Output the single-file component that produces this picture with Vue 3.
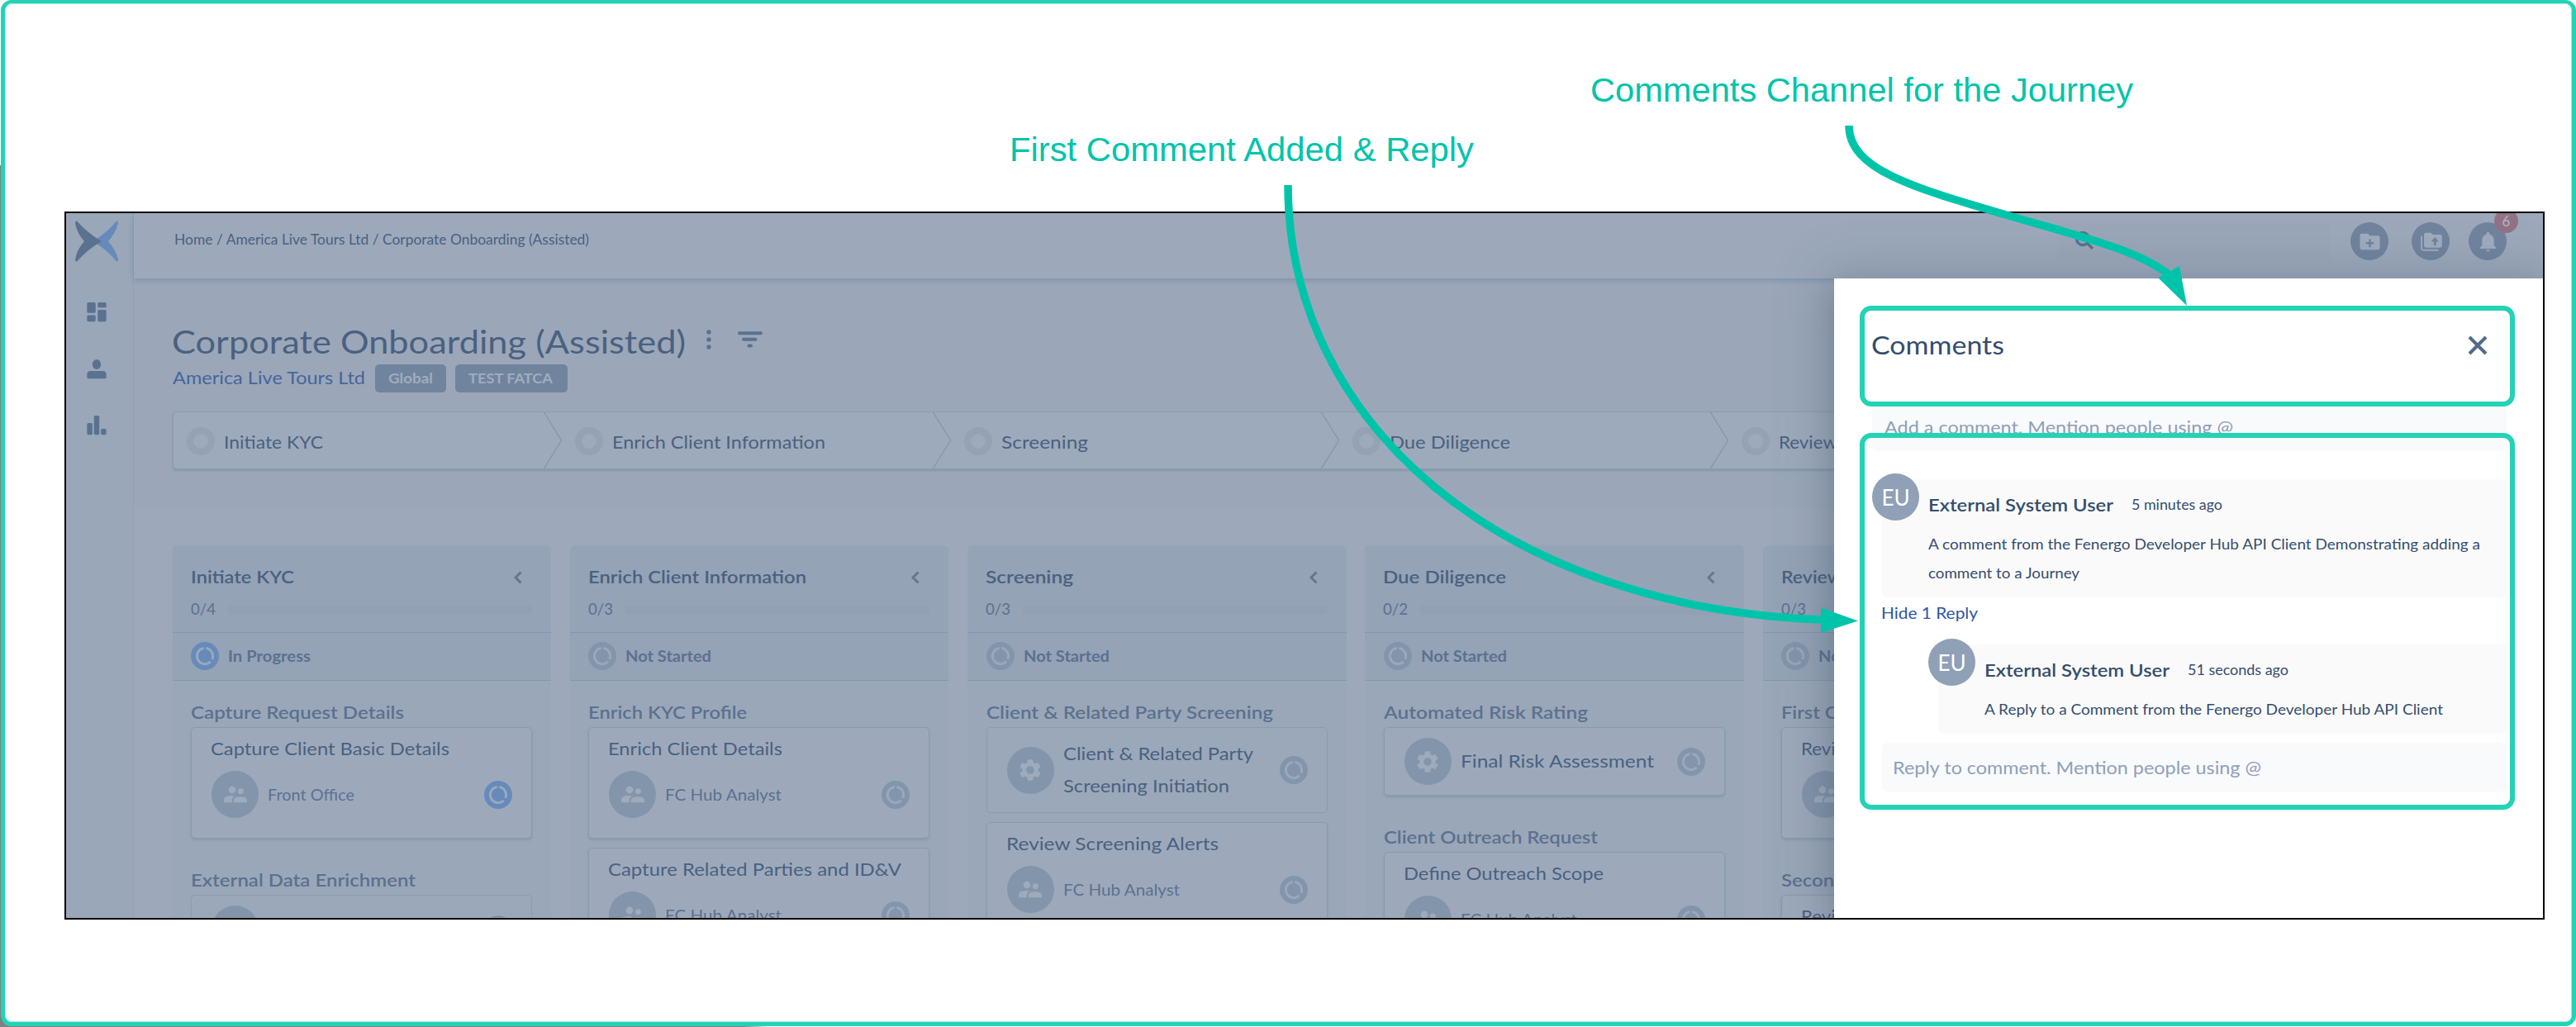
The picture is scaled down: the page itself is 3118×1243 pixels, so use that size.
<script setup>
// widens or narrows a label so it takes the given width
const vFit = {
  mounted(el, { value }) {
    if (!value) return;
    el.style.display = 'inline-block';
    const natural = el.getBoundingClientRect().width;
    el.style.transformOrigin = 'left center';
    el.style.transform = `scaleX(${value / natural})`;
    el.style.marginRight = value - natural + 'px';
  },
};

const steps = [
  { name: 'Initiate KYC', width: 120 },
  { name: 'Enrich Client Information', width: 258 },
  { name: 'Screening', width: 105 },
  { name: 'Due Diligence', width: 146 },
  { name: 'Review', width: 71 },
];

const analyst = { name: 'FC Hub Analyst', width: 141 };

const columns = [
  {
    name: 'Initiate KYC', width: 125, count: '0/4', active: true, status: 'In Progress', statusWidth: 100,
    sections: [
      {
        name: 'Capture Request Details', width: 258,
        tasks: [{ name: 'Capture Client Basic Details', width: 289, owner: { name: 'Front Office', width: 105 }, active: true }],
      },
      {
        name: 'External Data Enrichment', width: 272,
        tasks: [{ name: '', system: true, flat: true }],
      },
    ],
  },
  {
    name: 'Enrich Client Information', width: 264, count: '0/3', status: 'Not Started', statusWidth: 104,
    sections: [
      {
        name: 'Enrich KYC Profile', width: 192,
        tasks: [
          { name: 'Enrich Client Details', width: 211, owner: analyst },
          { name: 'Capture Related Parties and ID&V', width: 355, owner: analyst },
        ],
      },
    ],
  },
  {
    name: 'Screening', width: 106, count: '0/3', status: 'Not Started', statusWidth: 104,
    sections: [
      {
        name: 'Client & Related Party Screening', width: 347,
        tasks: [
          { name: 'Client & Related Party', width: 230, second: 'Screening Initiation', secondWidth: 201, system: true, flat: true },
          { name: 'Review Screening Alerts', width: 257, owner: analyst },
        ],
      },
    ],
  },
  {
    name: 'Due Diligence', width: 149, count: '0/2', status: 'Not Started', statusWidth: 104,
    sections: [
      { name: 'Automated Risk Rating', width: 247, tasks: [{ name: 'Final Risk Assessment', width: 234, system: true }] },
      { name: 'Client Outreach Request', width: 259, tasks: [{ name: 'Define Outreach Scope', width: 242, owner: analyst }] },
    ],
  },
  {
    name: 'Review', width: 74, count: '0/3', status: 'Not Started', statusWidth: 104,
    sections: [
      { name: 'First Check', width: 118, tasks: [{ name: 'Review', width: 71, owner: analyst }] },
      { name: 'Second Check', width: 150, tasks: [{ name: 'Review', width: 71, owner: analyst }] },
    ],
  },
];
</script>

<template>
  <div class="page">
    <div class="canvas">
      <div class="frame">
        <aside class="sidebar">
          <svg class="logo" viewBox="0 0 52 50">
            <path fill="#668abb" d="M50 0.5Q52 0 52 3Q49 15 40 25Q49 35 52 47Q52 50 50 49.5Q40 37 26 28V22Q40 13 50 0.5Z" />
            <path fill="#5b7190" d="M2 0.5Q0 0 0 3Q2 15 11 25Q2 35 0 47Q0 50 2 49.5Q16 34 32 25Q16 16 2 0.5Z" />
          </svg>
          <svg class="nav-icon" viewBox="0 0 24 24">
            <rect x="3" y="3" width="8" height="10" rx="1.2" /><rect x="3" y="15" width="8" height="6" rx="1.2" />
            <rect x="13" y="3" width="8" height="5" rx="1.2" /><rect x="13" y="10" width="8" height="11" rx="1.2" />
          </svg>
          <svg class="nav-icon" viewBox="0 0 24 24">
            <ellipse cx="12" cy="7.7" rx="4" ry="4.7" /><path d="M3 20V17Q3 14 6.5 14H17.5Q21 14 21 17V20Q21 21 20 21H4Q3 21 3 20Z" />
          </svg>
          <svg class="nav-icon" viewBox="0 0 24 24">
            <rect x="3" y="10" width="5" height="11" rx="1.2" /><rect x="9.5" y="3" width="5" height="18" rx="1.2" /><rect x="16" y="15.5" width="5" height="5.5" rx="1.2" />
          </svg>
        </aside>

        <div class="main">
          <header class="topbar">
            <span class="crumbs"><span v-fit="502">Home / America Live Tours Ltd / Corporate Onboarding (Assisted)</span></span>
            <div class="tools">
              <div class="search">
                <svg viewBox="0 0 24 24"><circle cx="10" cy="10" r="7.5" /><path d="M15.5 15.5L22 22" /></svg>
              </div>
              <div class="tool">
                <svg viewBox="0 0 24 24">
                  <path fill="#9fadbf" d="M4 4H10L12 6H20Q22 6 22 8V18Q22 20 20 20H4Q2 20 2 18V6Q2 4 4 4Z" />
                  <path stroke="#71849e" stroke-width="2" d="M12 9.5V17.5M8 13.5H16" />
                </svg>
              </div>
              <div class="tool">
                <svg viewBox="0 0 24 24">
                  <path fill="#9fadbf" d="M7 3H12L14 5H21Q23 5 23 7V16Q23 18 21 18H7Q5 18 5 16V5Q5 3 7 3Z" />
                  <path fill="none" stroke="#9fadbf" stroke-width="1.5" d="M2.5 6V18.5Q2.5 20.5 4.5 20.5H19.5" />
                  <path fill="#71849e" d="M14.8 16V12H12L16 7.5L20 12H17.2V16Z" />
                </svg>
              </div>
              <div class="tool bell">
                <svg viewBox="0 0 24 24">
                  <path fill="#9fadbf" d="M12 22Q14 22 14 20H10Q10 22 12 22ZM18 16V11Q18 6 13.5 4.7V4Q13.5 2.5 12 2.5T10.5 4V4.7Q6 6 6 11V16L4 18V19H20V18Z" />
                </svg>
                <span class="badge">6</span>
              </div>
            </div>
          </header>

          <section class="summary">
            <div class="title-row">
              <h1><span v-fit="622">Corporate Onboarding (Assisted)</span></h1>
              <svg class="dots" viewBox="0 0 6 24"><circle cx="3" cy="3" r="2.7" /><circle cx="3" cy="12" r="2.7" /><circle cx="3" cy="21" r="2.7" /></svg>
              <svg class="filter" viewBox="0 0 30 20"><path d="M2 2.2H28M7 9.8H21.5M13.5 17.5H16" /></svg>
            </div>
            <div class="client-row">
              <span class="client"><span v-fit="233">America Live Tours Ltd</span></span>
              <span class="tag"><span v-fit="54">Global</span></span>
              <span class="tag tag-wide"><span v-fit="102">TEST FATCA</span></span>
            </div>
            <div class="steps">
              <div v-for="step in steps" :key="step.name" class="step">
                <i class="ring"></i>
                <span class="step-name"><span v-fit="step.width">{{ step.name }}</span></span>
                <svg class="arrow" viewBox="0 0 22 68"><path d="M0.5 0L21.5 34L0.5 68" /></svg>
              </div>
            </div>
          </section>

          <section class="board">
            <div v-for="column in columns" :key="column.name" class="column">
              <div class="column-head">
                <div class="column-title">
                  <span v-fit="column.width">{{ column.name }}</span>
                  <svg viewBox="0 0 10 16"><path d="M8.5 1.5L2 8L8.5 14.5" /></svg>
                </div>
                <div class="progress"><span v-fit="30">{{ column.count }}</span><i></i></div>
              </div>
              <div class="column-status">
                <svg class="state" :class="{ active: column.active }" viewBox="0 0 34 34">
                  <circle cx="17" cy="17" r="17" />
                  <path d="M18.3 7.5A9.6 9.6 0 0 1 25.8 20.8M23.8 23.8A9.6 9.6 0 1 1 15.7 7.5" />
                </svg>
                <span v-fit="column.statusWidth">{{ column.status }}</span>
              </div>
              <div class="column-body">
                <div v-for="section in column.sections" :key="section.name" class="section">
                  <h3><span v-fit="section.width">{{ section.name }}</span></h3>
                  <div v-for="task in section.tasks" :key="task.name" class="card" :class="{ system: task.system, flat: task.flat }">
                    <p v-if="!task.system" class="task-name"><span v-fit="task.width">{{ task.name }}</span></p>
                    <div class="task-row">
                      <div class="avatar">
                        <svg v-if="task.system" viewBox="0 0 24 24">
                          <path d="M19.14 12.94c.04-.3.06-.61.06-.94s-.02-.64-.07-.94l2.03-1.58c.18-.14.23-.41.12-.61l-1.92-3.32c-.12-.22-.37-.29-.59-.22l-2.39.96c-.5-.38-1.03-.7-1.62-.94l-.36-2.54c-.04-.24-.24-.41-.48-.41h-3.84c-.24 0-.43.17-.47.41l-.36 2.54c-.59.24-1.13.57-1.62.94l-2.39-.96c-.22-.08-.47 0-.59.22L2.74 8.87c-.12.21-.08.47.12.61l2.03 1.58c-.05.3-.09.63-.09.94s.02.64.07.94l-2.03 1.58c-.18.14-.23.41-.12.61l1.92 3.32c.12.22.37.29.59.22l2.39-.96c.5.38 1.03.7 1.62.94l.36 2.54c.05.24.24.41.48.41h3.84c.24 0 .44-.17.47-.41l.36-2.54c.59-.24 1.13-.56 1.62-.94l2.39.96c.22.08.47 0 .59-.22l1.92-3.32c.12-.22.07-.47-.12-.61zM12 15.6A3.6 3.6 0 1 1 12 8.4a3.6 3.6 0 0 1 0 7.2z" />
                        </svg>
                        <svg v-else viewBox="0 0 24 24">
                          <circle cx="9" cy="7.5" r="3.3" /><circle cx="16.8" cy="8.8" r="2.6" />
                          <path d="M1.5 19V16.5Q1.5 12.8 8.5 12.8Q10.3 12.8 11.5 13.2Q8.8 14.5 8.8 17.5V19ZM10.3 19V17.5Q10.3 13.7 16.5 13.7Q22.5 13.7 22.5 17V19Z" />
                        </svg>
                      </div>
                      <div v-if="task.system" class="system-name">
                        <span v-if="task.name" v-fit="task.width">{{ task.name }}</span>
                        <span v-if="task.second" v-fit="task.secondWidth">{{ task.second }}</span>
                      </div>
                      <span v-else class="owner"><span v-fit="task.owner.width">{{ task.owner.name }}</span></span>
                      <svg class="state" :class="{ active: task.active }" viewBox="0 0 34 34">
                        <circle cx="17" cy="17" r="17" />
                        <path d="M18.3 7.5A9.6 9.6 0 0 1 25.8 20.8M23.8 23.8A9.6 9.6 0 1 1 15.7 7.5" />
                      </svg>
                    </div>
                  </div>
                </div>
              </div>
            </div>
          </section>
        </div>

        <!-- comments drawer -->
        <div class="drawer">
          <div class="drawer-head">
            <h2><span v-fit="161">Comments</span></h2>
            <svg viewBox="0 0 24 24"><path d="M2 2L22 22M22 2L2 22" /></svg>
          </div>
          <div class="input"><span v-fit="422">Add a comment. Mention people using @</span></div>
          <div class="thread">
            <div class="comment">
              <div class="user">EU</div>
              <div class="meta"><b v-fit="224">External System User</b><time v-fit="110">5 minutes ago</time></div>
              <div class="text">
                <span v-fit="668">A comment from the Fenergo Developer Hub API Client Demonstrating adding a</span>
                <span v-fit="183">comment to a Journey</span>
              </div>
            </div>
            <a class="toggle"><span v-fit="117">Hide 1 Reply</span></a>
            <div class="comment reply">
              <div class="user">EU</div>
              <div class="meta"><b v-fit="224">External System User</b><time v-fit="122">51 seconds ago</time></div>
              <div class="text"><span v-fit="555">A Reply to a Comment from the Fenergo Developer Hub API Client</span></div>
            </div>
            <div class="input reply-input"><span v-fit="446">Reply to comment. Mention people using @</span></div>
          </div>
        </div>
      </div>
    </div>

    <!-- annotations -->
    <div class="outline outline-head"></div>
    <div class="outline outline-thread"></div>
    <div class="note note-reply"><span v-fit="562">First Comment Added &amp; Reply</span></div>
    <div class="note note-channel"><span v-fit="657">Comments Channel for the Journey</span></div>
    <svg class="pointers" viewBox="0 0 3118 1243">
      <path class="line" d="M1559 224C1559 511 1815 735 2206 750" />
      <path class="tip" d="M2204 735.5L2249 751.5L2204 766Z" />
      <path class="line" d="M2238 152C2238 205 2315 227 2428 260C2520 287 2590 303 2627 334" />
      <path class="tip" d="M2612 336L2638 322L2647 370Z" />
    </svg>
  </div>
</template>

<style>
body {
  margin: 0;
  background: #fff;
}
</style>

<style scoped>
.page {
  position: relative;
  box-sizing: border-box;
  width: 3118px;
  height: 1243px;
  padding: 0 0 1px 1px;
  overflow: hidden;
  font-family: Lato, "Open Sans", sans-serif;
  color: #4a6180;
  background: linear-gradient(90deg, #808080 900px, #fff 930px) 0 200px no-repeat;
}

.page span,
.page b,
.page time {
  white-space: nowrap;
}

.canvas {
  box-sizing: border-box;
  width: 3117px;
  height: 1242px;
  padding: 252px 0 0 72px;
  border: 5px solid #22d3b5;
  border-top-width: 4px;
  border-radius: 13px;
  background: #fff;
  box-shadow: inset 0 0 0 1px #a5ece0;
}

.frame {
  position: relative;
  z-index: 0;
  box-sizing: border-box;
  display: flex;
  width: 3002px;
  height: 857px;
  overflow: hidden;
  border: 2px solid #000;
  background: #9ba7b9;
}

.sidebar {
  display: flex;
  flex: none;
  flex-direction: column;
  align-items: center;
  width: 82px;
  box-sizing: border-box;
  padding-right: 7px;
  border-right: 1px solid #92a0b4;
  background: #9aa7b9;
}

.logo {
  width: 52px;
  height: 50px;
  margin: 9px 0 45px;
}

.nav-icon {
  width: 32px;
  height: 31px;
  margin-bottom: 37.5px;
  fill: #5b7190;
}

.main {
  display: flex;
  flex: 1;
  flex-direction: column;
  min-width: 0;
}

.topbar {
  z-index: 1;
  display: flex;
  flex: none;
  justify-content: space-between;
  box-sizing: border-box;
  height: 79px;
  padding: 11px 44px 0 48.5px;
  background: #9da9bb;
  box-shadow: 0 2px 7px #7b91ab;
}

.crumbs {
  padding-top: 11px;
  font-size: 17.3px;
  line-height: 20px;
}

.tools {
  display: flex;
  align-items: flex-start;
}

.search {
  box-sizing: border-box;
  width: 331px;
  height: 46px;
  margin-right: 24px;
  padding: 10px 20px;
  border-radius: 4px;
  background: #9ba7b9;
}

.search svg {
  width: 26px;
  height: 24px;
  fill: none;
  stroke: #5b7190;
  stroke-width: 3.3;
}

.tool {
  display: flex;
  align-items: center;
  justify-content: center;
  width: 46px;
  height: 46px;
  margin-right: 28px;
  border-radius: 50%;
  background: #71849e;
}

.tool svg {
  width: 31px;
  height: 29px;
}

.bell {
  position: relative;
  margin: 0 0 0 -5px;
}

.badge {
  position: absolute;
  top: -16px;
  right: -14px;
  width: 29px;
  height: 29px;
  border-radius: 50%;
  background: #927284;
  color: #b3b6c3;
  font-size: 17px;
  line-height: 29px;
  text-align: center;
}

.summary {
  flex: none;
  box-sizing: border-box;
  height: 277px;
  padding: 51px 0 0 47px;
}

.title-row {
  display: flex;
  height: 50px;
}

h1,
h2,
h3,
p {
  margin: 0;
  font-weight: 400;
}

h1 {
  width: 647px;
  margin-left: -1px;
  font-size: 39px;
  line-height: 50px;
}

.dots {
  width: 6px;
  height: 24px;
  margin: 11px 32px 0 0;
  fill: #5b7190;
}

.filter {
  width: 30px;
  height: 20px;
  margin-top: 13px;
  fill: none;
  stroke: #5b7190;
  stroke-width: 4;
  stroke-linecap: round;
}

.client-row {
  display: flex;
  height: 34px;
  margin-top: 3px;
  line-height: 32px;
}

.client {
  width: 245px;
  color: #46659c;
  font-size: 22px;
}

.tag {
  box-sizing: border-box;
  width: 86px;
  margin-right: 11px;
  padding-left: 16px;
  border-radius: 5px;
  background: #71849e;
  color: #9fadbf;
  font-size: 17px;
  font-weight: 700;
  line-height: 33px;
}

.tag-wide {
  width: 136px;
}

.steps {
  display: flex;
  box-sizing: border-box;
  height: 70px;
  margin-top: 23px;
  border: 1px solid #8b9bb0;
  border-radius: 5px 0 0 5px;
  background: #9daabb;
  box-shadow: 0 2px 3px #8497ae;
}

.step {
  display: flex;
  flex: none;
  align-items: center;
  box-sizing: border-box;
  width: 470.4px;
  padding-left: 16px;
  font-size: 21.7px;
}

.ring {
  box-sizing: border-box;
  width: 34px;
  height: 34px;
  margin: 2px 11px 0 0;
  border: 8px solid #95a1b4;
  border-radius: 50%;
}

.step-name {
  padding-top: 3px;
}

.arrow {
  width: 22px;
  height: 68px;
  margin-left: auto;
  fill: none;
  stroke: #8497ae;
  stroke-width: 1.3;
}

.board {
  display: flex;
  flex: 1;
  gap: 22.8px;
  min-height: 0;
  padding: 46px 0 0 46.5px;
  background: #9da9bb;
}

.column {
  flex: none;
  width: 458.5px;
  background: #9aa7b8;
  border-radius: 6px 6px 0 0;
}

.column-head {
  box-sizing: border-box;
  height: 106px;
  padding: 23px 23px 0 22px;
  border-bottom: 1px solid #8296ad;
  border-radius: 6px 6px 0 0;
  background: #94a3b6;
}

.column-title {
  display: flex;
  align-items: center;
  justify-content: space-between;
  padding-right: 12px;
  font-size: 21.5px;
  font-weight: 600;
  line-height: 30px;
}

.column-title svg {
  width: 10px;
  height: 16px;
  margin-top: 2px;
  fill: none;
  stroke: #65778a;
  stroke-width: 3;
}

.progress {
  display: flex;
  align-items: center;
  gap: 14px;
  margin-top: 12px;
  color: #5b7190;
  font-size: 19px;
  line-height: 24px;
}

.progress i {
  flex: 1;
  height: 11px;
  margin-top: 2px;
  border-radius: 5px;
  background: #93a0b4;
}

.column-status {
  display: flex;
  align-items: center;
  gap: 11px;
  box-sizing: border-box;
  height: 58px;
  padding: 0 0 1px 22.5px;
  border-bottom: 1px solid #8296ad;
  background: #94a3b6;
  color: #5b7190;
  font-size: 18.5px;
  font-weight: 700;
}

.state {
  flex: none;
  width: 34px;
  height: 34px;
  fill: #8395ab;
}

.state path {
  fill: none;
  stroke: #9aa8ba;
  stroke-width: 3;
}

.state.active {
  fill: #668abb;
}

.column-body {
  padding: 23px 23px 0 22.5px;
}

.section {
  margin-bottom: 35px;
}

h3 {
  margin-bottom: 3px;
  color: #5b7190;
  font-size: 21.5px;
  font-weight: 600;
  line-height: 30px;
}

.card {
  box-sizing: border-box;
  margin-bottom: 11px;
  padding: 10px 23px 24px 24px;
  border: 1px solid #889aaf;
  border-radius: 5px;
  background: #9da9bb;
  box-shadow: 0 2px 3px #8799af;
}

.card.system {
  padding: 12px 23px 12px 24px;
}

.card.flat {
  border-color: #8b9bb0;
  background: #9ba8b9;
  box-shadow: none;
}

.task-name {
  margin: 0 0 12px -1px;
  font-size: 21.7px;
  line-height: 30px;
}

.task-row {
  display: flex;
  align-items: center;
  gap: 11px;
}

.avatar {
  display: flex;
  flex: none;
  align-items: center;
  justify-content: center;
  width: 57px;
  height: 57px;
  border-radius: 50%;
  background: #8395ab;
}

.avatar svg {
  width: 32px;
  height: 32px;
  fill: #9dabbc;
}

.system-name {
  display: flex;
  flex-direction: column;
  align-items: flex-start;
  font-size: 21.7px;
  line-height: 39px;
}

.owner {
  color: #5b7190;
  font-size: 19.3px;
}

.task-row .state {
  margin-left: auto;
}

.drawer {
  position: absolute;
  z-index: 2;
  top: 79px;
  right: 0;
  bottom: 0;
  box-sizing: border-box;
  width: 858px;
  padding: 0 44px 0 46px;
  background: #fff;
  box-shadow: 0 16px 24px 2px rgba(60, 75, 100, 0.14), 0 6px 60px 10px rgba(60, 75, 100, 0.3);
  color: #344d6e;
}

.drawer-head {
  display: flex;
  align-items: flex-start;
  justify-content: space-between;
  box-sizing: border-box;
  height: 150px;
  padding: 60px 23px 0 0;
}

h2 {
  margin-left: -1px;
  font-size: 31.5px;
  line-height: 40px;
}

.drawer-head svg {
  width: 24px;
  height: 24px;
  margin-top: 9px;
  fill: none;
  stroke: #536b8b;
  stroke-width: 4;
  overflow: visible;
}

.input {
  height: 59px;
  padding-left: 15px;
  border-radius: 6px;
  background: #f9fafc;
  color: #8fa0b7;
  font-size: 21.5px;
  line-height: 61px;
}

.thread {
  padding: 34px 0 0 12px;
}

.comment {
  position: relative;
  padding: 18px 0 11px 56px;
  border-radius: 6px;
  background: #fafafa;
}

.user {
  position: absolute;
  top: -7px;
  left: -12px;
  width: 57px;
  height: 57px;
  border-radius: 50%;
  background: #8fa0b7;
  color: #fff;
  font-size: 26px;
  line-height: 58px;
  text-align: center;
}

.meta {
  display: flex;
  gap: 22px;
  margin-bottom: 17px;
  line-height: 26px;
}

.meta b {
  font-size: 21.5px;
  font-weight: 600;
}

.meta time {
  font-size: 16.5px;
}

.text {
  display: flex;
  flex-direction: column;
  align-items: flex-start;
  padding-bottom: 1px;
  font-size: 17.3px;
  line-height: 35px;
}

.toggle {
  display: block;
  margin: 6px 0 25px -1px;
  color: #2b56a8;
  font-size: 19.3px;
  line-height: 26px;
}

.reply {
  margin-left: 68px;
}

.reply-input {
  margin-top: 11px;
  padding-left: 13px;
}

.outline {
  position: absolute;
  z-index: 1;
  left: 2251px;
  box-sizing: border-box;
  width: 793px;
  border: 6px solid #22d3b5;
  border-radius: 14px;
}

.outline-head {
  top: 370px;
  height: 122px;
  background: #fff;
  background: transparent;
}

.outline-thread {
  top: 524px;
  height: 456px;
}

.note {
  position: absolute;
  z-index: 1;
  color: #00c4aa;
  font-family: "Liberation Sans", Arial, sans-serif;
  font-size: 41.5px;
  line-height: 50px;
}

.note-reply {
  top: 156px;
  left: 1222px;
}

.note-channel {
  top: 84px;
  left: 1925px;
}

.pointers {
  position: absolute;
  z-index: 2;
  top: 0;
  left: 0;
  width: 3118px;
  height: 1243px;
}

.line {
  fill: none;
  stroke: #00c4aa;
  stroke-width: 9.5;
}

.tip {
  fill: #00c4aa;
}
</style>
